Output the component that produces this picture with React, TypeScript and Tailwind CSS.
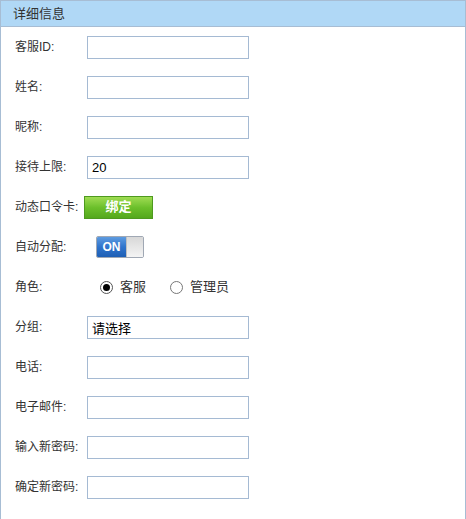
const font = { fontFamily: '"Liberation Sans", "Noto Sans CJK SC", sans-serif' };

const Field = ({ label, value }: { label: string; value?: string }) => (
  <div className="flex h-[40px] items-center">
    <span className="w-[72px] text-[12px] text-[#333]">{label}</span>
    <input
      readOnly
      value={value ?? ""}
      className="h-[23px] w-[162px] border border-[#a5bad3] bg-white px-[4px] text-[13px] text-black outline-none"
      style={font}
    />
  </div>
);

export default function App() {
  return (
    <div className="h-[519px] w-[466px] bg-white" style={font}>
      <div className="h-full border-x border-t border-[#a7bdd4]">
        <div className="flex h-[26px] items-center border-b border-[#a7bdd4] bg-[#b0d8f6] pl-[12px] text-[13px] text-[#333]">
          详细信息
        </div>
        <div className="pl-[14px]">
          <Field label="客服ID:" />
          <Field label="姓名:" />
          <Field label="昵称:" />
          <Field label="接待上限:" value="20" />
          <div className="flex h-[40px] items-center">
            <span className="w-[72px] text-[12px] text-[#333]">动态口令卡:</span>
            <button className="ml-[-3px] flex h-[23px] w-[69px] items-center justify-center border border-[#4e9a1f] bg-gradient-to-b from-[#9fdc52] via-[#6cc02b] to-[#54a81c] text-[13px] font-bold text-white">
              绑定
            </button>
          </div>
          <div className="flex h-[40px] items-center">
            <span className="w-[72px] text-[12px] text-[#333]">自动分配:</span>
            <div className="ml-[9px] flex h-[22px] w-[48px] overflow-hidden rounded-[2px] border border-[#a0a8b4]">
              <div className="flex w-[29px] items-center justify-center bg-gradient-to-b from-[#5d9be0] via-[#2f74cc] to-[#1e5fb5] text-[12px] font-bold text-white">
                ON
              </div>
              <div className="flex-1 bg-gradient-to-b from-[#d8d8d8] to-[#f4f4f4] border-l border-[#c0c0c0]" />
            </div>
          </div>
          <div className="flex h-[40px] items-center text-[12px] text-[#333]">
            <span className="w-[72px]">角色:</span>
            <span className="ml-[13px] flex h-[13px] w-[13px] items-center justify-center rounded-full border border-[#555] bg-white">
              <span className="h-[7px] w-[7px] rounded-full bg-black" />
            </span>
            <span className="ml-[7px] text-[13px]">客服</span>
            <span className="ml-[24px] h-[13px] w-[13px] rounded-full border border-[#777] bg-white" />
            <span className="ml-[7px] text-[13px]">管理员</span>
          </div>
          <Field label="分组:" value="请选择" />
          <Field label="电话:" />
          <Field label="电子邮件:" />
          <Field label="输入新密码:" />
          <Field label="确定新密码:" />
        </div>
      </div>
    </div>
  );
}
